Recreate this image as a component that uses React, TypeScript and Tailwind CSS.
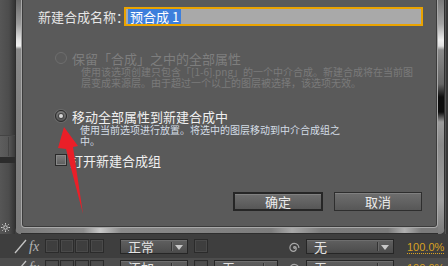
import React from 'react';

const cjk = "font-['Noto_Sans_CJK_SC',sans-serif]";

function Radio({ checked, disabled }: { checked?: boolean; disabled?: boolean }) {
  if (disabled || !checked) {
    return (
      <div className="w-[12px] h-[12px] rounded-full border border-[#6e6e6e] bg-[#5b5b5b] shrink-0" />
    );
  }
  return (
    <div className="w-[12px] h-[12px] rounded-full border border-[#2a2a2a] bg-[linear-gradient(to_bottom,#7c7c7c,#545454)] shrink-0 flex items-center justify-center shadow-[0_0_0_1px_#6a6a6a]">
      <div className="w-[4px] h-[4px] rounded-full bg-[#d8d8d8] shadow-[0_0_0_1px_#444]" />
    </div>
  );
}

function Dropdown({ label, width, divider }: { label: string; width: string; divider: string }) {
  return (
    <div
      className={`${width} h-[15px] shrink-0 border border-[#262626] bg-[linear-gradient(to_bottom,#606060,#4b4b4b)] shadow-[inset_0_1px_0_#6e6e6e] flex items-center relative`}
    >
      <span className={`${cjk} text-[13px] leading-none text-[#e4e4e4] pl-[7px]`}>{label}</span>
      <div className={`absolute top-[2px] bottom-[2px] ${divider} w-[1px] bg-[#333] shadow-[1px_0_0_#6a6a6a]`} />
      <div className="absolute right-[4px] top-[5px] w-0 h-0 border-l-[4px] border-r-[4px] border-t-[5px] border-l-transparent border-r-transparent border-t-[#c8c8c8]" />
    </div>
  );
}

function Box() {
  return <div className="w-[14px] h-[14px] shrink-0 border border-[#2b2b2b] shadow-[inset_0_0_0_1px_#4a4a4a]" />;
}

function Spiral() {
  return (
    <svg width="11" height="11" viewBox="0 0 11 11" className="shrink-0">
      <path
        d="M5.5 5.5 m0.8 0 a0.8 0.8 0 1 1 -0.8 -0.8 a1.8 1.8 0 0 1 1.8 1.8 a2.8 2.8 0 0 1 -2.8 2.8 a3.6 3.6 0 0 1 -3.6 -3.6 a4.4 4.4 0 0 1 4.4 -4.4 a4.6 4.6 0 0 1 4.6 4.6"
        fill="none"
        stroke="#a8a8a8"
        strokeWidth="1.2"
      />
    </svg>
  );
}

function TimelineRow({ mode, trk, bg }: { mode: string; trk: boolean; bg: string }) {
  return (
    <div className={`h-[19px] ${bg} flex items-start pl-[13px] shrink-0`}>
      <svg width="14" height="15" viewBox="0 0 14 15" className="shrink-0">
        <line x1="2" y1="14" x2="13" y2="1" stroke="#c4c4c4" strokeWidth="1.3" />
      </svg>
      <span className="w-[16px] ml-[2px] font-['Liberation_Serif',serif] italic text-[14px] leading-[15px] text-[#b4b4b4] shrink-0">
        fx
      </span>
      <div className="flex gap-[1px]">
        <Box />
        <Box />
        <Box />
        <Box />
      </div>
      <div className="ml-[16px]">
        <Dropdown label={mode} width="w-[68px]" divider="left-[50px]" />
      </div>
      <div className="ml-[6px]">
        <Box />
      </div>
      <div className="ml-[6px] w-[64px] shrink-0">
        {trk && <Dropdown label="无" width="w-[64px]" divider="left-[48px]" />}
      </div>
      <div className="ml-[11px] pt-[3px]">
        <Spiral />
      </div>
      <div className="ml-[6px]">
        <Dropdown label="无" width="w-[88px]" divider="left-[70px]" />
      </div>
      <div className="ml-[13px] pt-[2px] font-['Liberation_Sans',sans-serif] text-[11px] leading-[12px] text-[#d9a222] border-b border-dotted border-[#d9a222]">
        100.0%
      </div>
    </div>
  );
}

export default function App() {
  return (
    <div className="w-[448px] h-[266px] overflow-hidden bg-[#3e3e3e] flex flex-col relative">
      <div className="h-[234px] flex shrink-0">
        {/* left panel strip */}
        <div className="w-[15px] flex flex-col bg-[linear-gradient(to_right,#565656,#4c4c4c_60%,#333)] shrink-0">
          <div className="h-[135px]" />
          <div className="h-[22px] border-t border-[#444] bg-[linear-gradient(to_right,#5e5e5e,#555_60%,#3a3a3a)] relative">
            <div className="absolute left-[8px] top-[1px] bottom-[1px] w-[1px] bg-[#444]" />
          </div>
          <div className="h-[6px] bg-[#2c2c2c]" />
          <div className="flex-1 flex flex-col justify-end pb-[2px] pl-[1px]">
            <svg width="9" height="9" viewBox="0 0 9 9">
              <circle cx="4.5" cy="4.5" r="1.8" fill="none" stroke="#d0d0d0" strokeWidth="1" />
              <g stroke="#d0d0d0" strokeWidth="1">
                <line x1="4.5" y1="0" x2="4.5" y2="1.6" />
                <line x1="4.5" y1="7.4" x2="4.5" y2="9" />
                <line x1="0" y1="4.5" x2="1.6" y2="4.5" />
                <line x1="7.4" y1="4.5" x2="9" y2="4.5" />
                <line x1="1.3" y1="1.3" x2="2.3" y2="2.3" />
                <line x1="6.7" y1="6.7" x2="7.7" y2="7.7" />
                <line x1="1.3" y1="7.7" x2="2.3" y2="6.7" />
                <line x1="6.7" y1="2.3" x2="7.7" y2="1.3" />
              </g>
            </svg>
          </div>
        </div>

        {/* dialog frame */}
        <div className="w-[430px] flex shrink-0 rounded-bl-[6px] rounded-br-[6px] overflow-hidden bg-[#7c7c7c]">
          <div className="w-[6px] shrink-0 border-l border-[#2e2e2e] bg-[linear-gradient(to_bottom,#6a6a6a_0px,#9c9c9c_24px,#e4e4e4_40px,#f2f2f2_46px,#8a8a8a_49px,#808080_110px,#7a7a7a_100%)]" />
          <div className="flex-1 flex flex-col bg-[linear-gradient(to_right,#7a7a7a,#8c8c8c_15%,#c8c8c8_19%,#8a8a8a_24%,#7c7c7c_60%,#a8a8a8_65%,#7c7c7c_72%,#7a7a7a_88%,#b0b0b0_92%,#7a7a7a_96%)]">
            <div className="flex-1 bg-[#5a5a5a] border-l border-r border-b border-[#a9a9a9] rounded-bl-[4px] rounded-br-[4px] flex flex-col shadow-[inset_1px_0_0_#3c3c3c,inset_-1px_0_0_#3c3c3c,inset_0_-1px_0_#3c3c3c]">
              {/* name row */}
              <div className="mt-[7px] h-[19px] flex items-center pl-[16px]">
                <span className={`${cjk} w-[86px] text-[13px] leading-none text-[#e6e6e6] whitespace-nowrap`}>
                  新建合成名称：
                </span>
                <div className="w-[299px] h-[19px] border-2 border-[#eaa300] bg-[#a9a9a9] flex items-center pl-[2px]">
                  <span className={`${cjk} bg-[#3d7fdc] text-white text-[13px] leading-[15px] px-[2px]`}>预合成 1</span>
                </div>
              </div>

              {/* option 1 (disabled) */}
              <div className="mt-[25px] h-[14px] flex items-center pl-[33px] gap-[5px]">
                <Radio disabled />
                <span className={`${cjk} text-[13px] leading-none text-[#7e7e7e] whitespace-nowrap`}>
                  保留「合成」之中的全部属性
                </span>
              </div>
              <div className={`${cjk} mt-[1px] pl-[59px] text-[10px] leading-[11px] text-[#7a7a7a] whitespace-nowrap`}>
                <div>使用该选项创建只包含「[1-6].png」的一个中介合成。新建合成将在当前图</div>
                <div>层变成来源层。由于超过一个以上的图层被选择，该选项无效。</div>
              </div>

              {/* option 2 (selected) */}
              <div className="mt-[21px] h-[14px] flex items-center pl-[33px] gap-[5px]">
                <Radio checked />
                <span className={`${cjk} text-[13px] leading-none text-[#f0f0f0] whitespace-nowrap`}>
                  移动全部属性到新建合成中
                </span>
              </div>
              <div className={`${cjk} mt-[1px] pl-[58px] text-[10px] leading-[11px] text-[#d4dde6] whitespace-nowrap`}>
                <div>使用当前选项进行放置。将选中的图层移动到中介合成组之</div>
                <div>中。</div>
              </div>

              {/* checkbox */}
              <div className="mt-[7px] h-[14px] flex items-center pl-[33px] gap-[3px]">
                <div className="w-[12px] h-[12px] border border-[#2a2a2a] bg-[linear-gradient(to_bottom,#7e7e7e,#5c5c5c)] shadow-[inset_0_0_0_1px_#888] shrink-0" />
                <span className={`${cjk} text-[13px] leading-none text-[#f0f0f0] whitespace-nowrap`}>打开新建合成组</span>
              </div>

              {/* buttons */}
              <div className="mt-[25px] flex justify-end pr-[15px] gap-[11px]">
                <button className={`${cjk} w-[90px] h-[19px] border-2 border-[#262626] bg-[linear-gradient(to_bottom,#6e6e6e,#575757)] shadow-[inset_0_1px_0_#808080] text-[13px] leading-none text-[#ececec]`}>
                  确定
                </button>
                <button className={`${cjk} w-[88px] h-[19px] border border-[#2e2e2e] bg-[linear-gradient(to_bottom,#6e6e6e,#575757)] shadow-[inset_0_1px_0_#808080] text-[13px] leading-none text-[#ececec]`}>
                  取消
                </button>
              </div>
            </div>
            <div className="h-[6px] shrink-0 border-b border-[#2e2e2e]" />
          </div>
          <div className="w-[7px] shrink-0 border-r border-[#2e2e2e] bg-[linear-gradient(to_bottom,#7a7a7a_0px,#a4a4a4_24px,#eeeeee_40px,#e0e0e0_46px,#8a8a8a_50px,#666_84px,#0e0e0e_97px,#0e0e0e_112px,#9c9c9c_122px,#8a8a8a_145px,#a0a0a0_200px,#7a7a7a_100%)]" />
        </div>

        {/* right strip */}
        <div className="flex-1 bg-[#383838] border-l border-[#555]" />
      </div>

      {/* timeline */}
      <div className="pt-[5px] bg-[#3e3e3e]">
        <TimelineRow mode="正常" trk={false} bg="bg-[#3e3e3e]" />
      </div>
      <div className="pt-[2px] bg-[#4d4d4d]">
        <TimelineRow mode="添加" trk={true} bg="bg-[#4d4d4d]" />
      </div>

      {/* red annotation arrow */}
      <svg className="absolute left-0 top-0 pointer-events-none" width="448" height="266" viewBox="0 0 448 266">
        <polygon points="64,127 78,146 73,147 83,214 66,149 58,148" fill="#ea1f28" />
      </svg>
    </div>
  );
}
